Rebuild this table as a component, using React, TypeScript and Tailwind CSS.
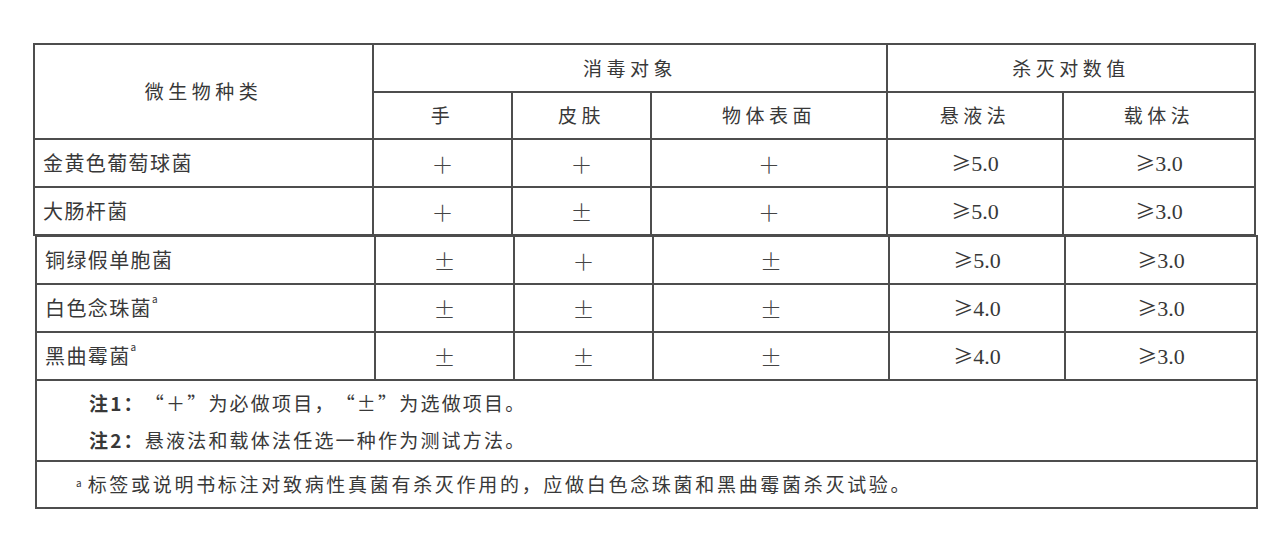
import React from "react";

const cjk = { fontFamily: '"Noto Sans CJK SC", sans-serif' };

type Row = {
  name: string;
  sup?: boolean;
  hand: string;
  skin: string;
  surface: string;
  suspension: string;
  carrier: string;
};

const upperRows: Row[] = [
  { name: "金黄色葡萄球菌", hand: "＋", skin: "＋", surface: "＋", suspension: "5.0", carrier: "3.0" },
  { name: "大肠杆菌", hand: "＋", skin: "±", surface: "＋", suspension: "5.0", carrier: "3.0" },
];

const lowerRows: Row[] = [
  { name: "铜绿假单胞菌", hand: "±", skin: "＋", surface: "±", suspension: "5.0", carrier: "3.0" },
  { name: "白色念珠菌", sup: true, hand: "±", skin: "±", surface: "±", suspension: "4.0", carrier: "3.0" },
  { name: "黑曲霉菌", sup: true, hand: "±", skin: "±", surface: "±", suspension: "4.0", carrier: "3.0" },
];

function Cols() {
  return (
    <colgroup>
      <col className="w-[339px]" />
      <col className="w-[139px]" />
      <col className="w-[139px]" />
      <col className="w-[236px]" />
      <col className="w-[176px]" />
      <col className="w-[192px]" />
    </colgroup>
  );
}

function Value({ v }: { v: string }) {
  return (
    <span className="inline-flex items-baseline">
      <span className="text-[20px]" style={cjk}>≥</span>
      <span className="text-[22px]" style={{ fontFamily: '"Liberation Serif", serif' }}>{v}</span>
    </span>
  );
}

const cell = "border-2 border-[#4d4d4d] h-[48px] p-0 text-center align-middle";
const mark = "text-[22px] font-light text-[#444]";

function DataRow({ r }: { r: Row }) {
  return (
    <tr>
      <td className={`${cell} text-left pl-[8px] text-[20px] tracking-[1.4px]`} style={cjk}>
        {r.name}
        {r.sup && <sup className="text-[10px] align-super tracking-normal">a</sup>}
      </td>
      <td className={`${cell} ${mark}`} style={cjk}>{r.hand}</td>
      <td className={`${cell} ${mark}`} style={cjk}>{r.skin}</td>
      <td className={`${cell} ${mark}`} style={cjk}>{r.surface}</td>
      <td className={cell}><Value v={r.suspension} /></td>
      <td className={cell}><Value v={r.carrier} /></td>
    </tr>
  );
}

// full-width quotes like the printed standard
function Q({ children }: { children: React.ReactNode }) {
  return <span className="[font-feature-settings:'fwid']">{children}</span>;
}

export default function App() {
  const head = "border-2 border-[#4d4d4d] p-0 text-center align-middle font-normal text-[19px] tracking-[4.5px]";
  return (
    <div className="w-[1268px] h-[542px] bg-white pt-[43px] text-[#383838]">
      <table className="ml-[33px] w-[1222px] table-fixed border-collapse">
        <Cols />
        <thead>
          <tr className="h-[48px]">
            <th rowSpan={2} className={head} style={cjk}>微生物种类</th>
            <th colSpan={3} className={head} style={cjk}>消毒对象</th>
            <th colSpan={2} className={head} style={cjk}>杀灭对数值</th>
          </tr>
          <tr className="h-[47px]">
            <th className={head} style={cjk}>手</th>
            <th className={head} style={cjk}>皮肤</th>
            <th className={head} style={cjk}>物体表面</th>
            <th className={head} style={cjk}>悬液法</th>
            <th className={head} style={cjk}>载体法</th>
          </tr>
        </thead>
        <tbody>
          {upperRows.map((r) => (
            <DataRow key={r.name} r={r} />
          ))}
        </tbody>
      </table>

      <table className="ml-[35px] -mt-[1px] w-[1222px] table-fixed border-collapse">
        <Cols />
        <tbody>
          {lowerRows.map((r) => (
            <DataRow key={r.name} r={r} />
          ))}
          <tr>
            <td colSpan={6} className="border-2 border-[#4d4d4d] h-[81px] pl-[52px] align-middle text-[19px] leading-[37px] tracking-[2.2px] [text-spacing-trim:space-all]" style={cjk}>
              <div>
                <span className="font-bold">注1：</span><Q>“</Q>＋<Q>”</Q>为必做项目，<Q>“</Q>±<Q>”</Q>为选做项目。
              </div>
              <div>
                <span className="font-bold">注2：</span>悬液法和载体法任选一种作为测试方法。
              </div>
            </td>
          </tr>
          <tr>
            <td colSpan={6} className="border-2 border-[#4d4d4d] h-[47px] pl-[39px] align-middle text-[19px] tracking-[2.7px] [text-spacing-trim:space-all]" style={cjk}>
              <sup className="text-[10px] tracking-normal mr-[6px]">a</sup>标签或说明书标注对致病性真菌有杀灭作用的，应做白色念珠菌和黑曲霉菌杀灭试验。
            </td>
          </tr>
        </tbody>
      </table>
    </div>
  );
}
